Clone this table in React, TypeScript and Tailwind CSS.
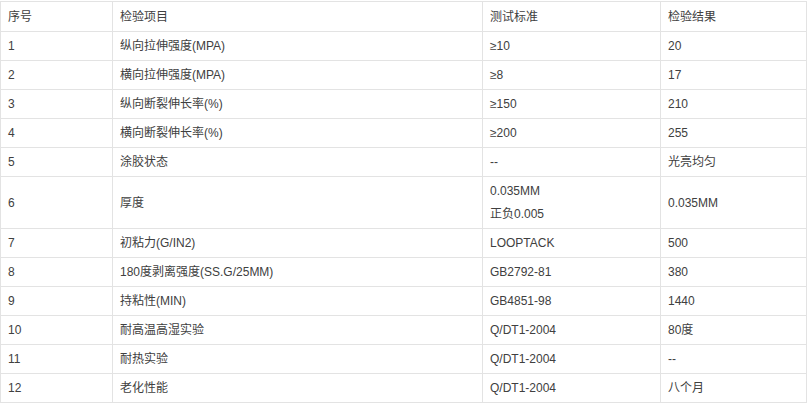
const rows: [string, string, string[], string][] = [
  ["1", "纵向拉伸强度(MPA)", ["≥10"], "20"],
  ["2", "横向拉伸强度(MPA)", ["≥8"], "17"],
  ["3", "纵向断裂伸长率(%)", ["≥150"], "210"],
  ["4", "横向断裂伸长率(%)", ["≥200"], "255"],
  ["5", "涂胶状态", ["--"], "光亮均匀"],
  ["6", "厚度", ["0.035MM", "正负0.005"], "0.035MM"],
  ["7", "初粘力(G/IN2)", ["LOOPTACK"], "500"],
  ["8", "180度剥离强度(SS.G/25MM)", ["GB2792-81"], "380"],
  ["9", "持粘性(MIN)", ["GB4851-98"], "1440"],
  ["10", "耐高温高湿实验", ["Q/DT1-2004"], "80度"],
  ["11", "耐热实验", ["Q/DT1-2004"], "--"],
  ["12", "老化性能", ["Q/DT1-2004"], "八个月"],
];

const cell = "flex flex-col justify-center border-r border-[#e3e3e3] pl-[7px]";

export default function App() {
  return (
    <div
      className="w-[808px] h-[404px] bg-white pt-px text-[12px] text-[#404040]"
      style={{ fontFamily: '"Liberation Sans", "Noto Sans CJK SC", sans-serif' }}
    >
      <div className="w-[807px] border-l border-t border-[#e3e3e3]">
        <div className="grid h-[30px] grid-cols-[112px_370px_178px_146px] border-b border-[#e3e3e3]">
          <div className={cell}>序号</div>
          <div className={cell}>检验项目</div>
          <div className={cell}>测试标准</div>
          <div className={cell}>检验结果</div>
        </div>
        {rows.map(([no, item, std, result]) => (
          <div
            key={no}
            className={`grid grid-cols-[112px_370px_178px_146px] border-b border-[#e3e3e3] ${
              std.length > 1 ? "h-[52px]" : "h-[29px]"
            }`}
          >
            <div className={cell}>{no}</div>
            <div className={cell}>{item}</div>
            <div className={cell}>
              {std.map((s) => (
                <p key={s} className="leading-[23px]">
                  {s}
                </p>
              ))}
            </div>
            <div className={cell}>{result}</div>
          </div>
        ))}
      </div>
    </div>
  );
}
